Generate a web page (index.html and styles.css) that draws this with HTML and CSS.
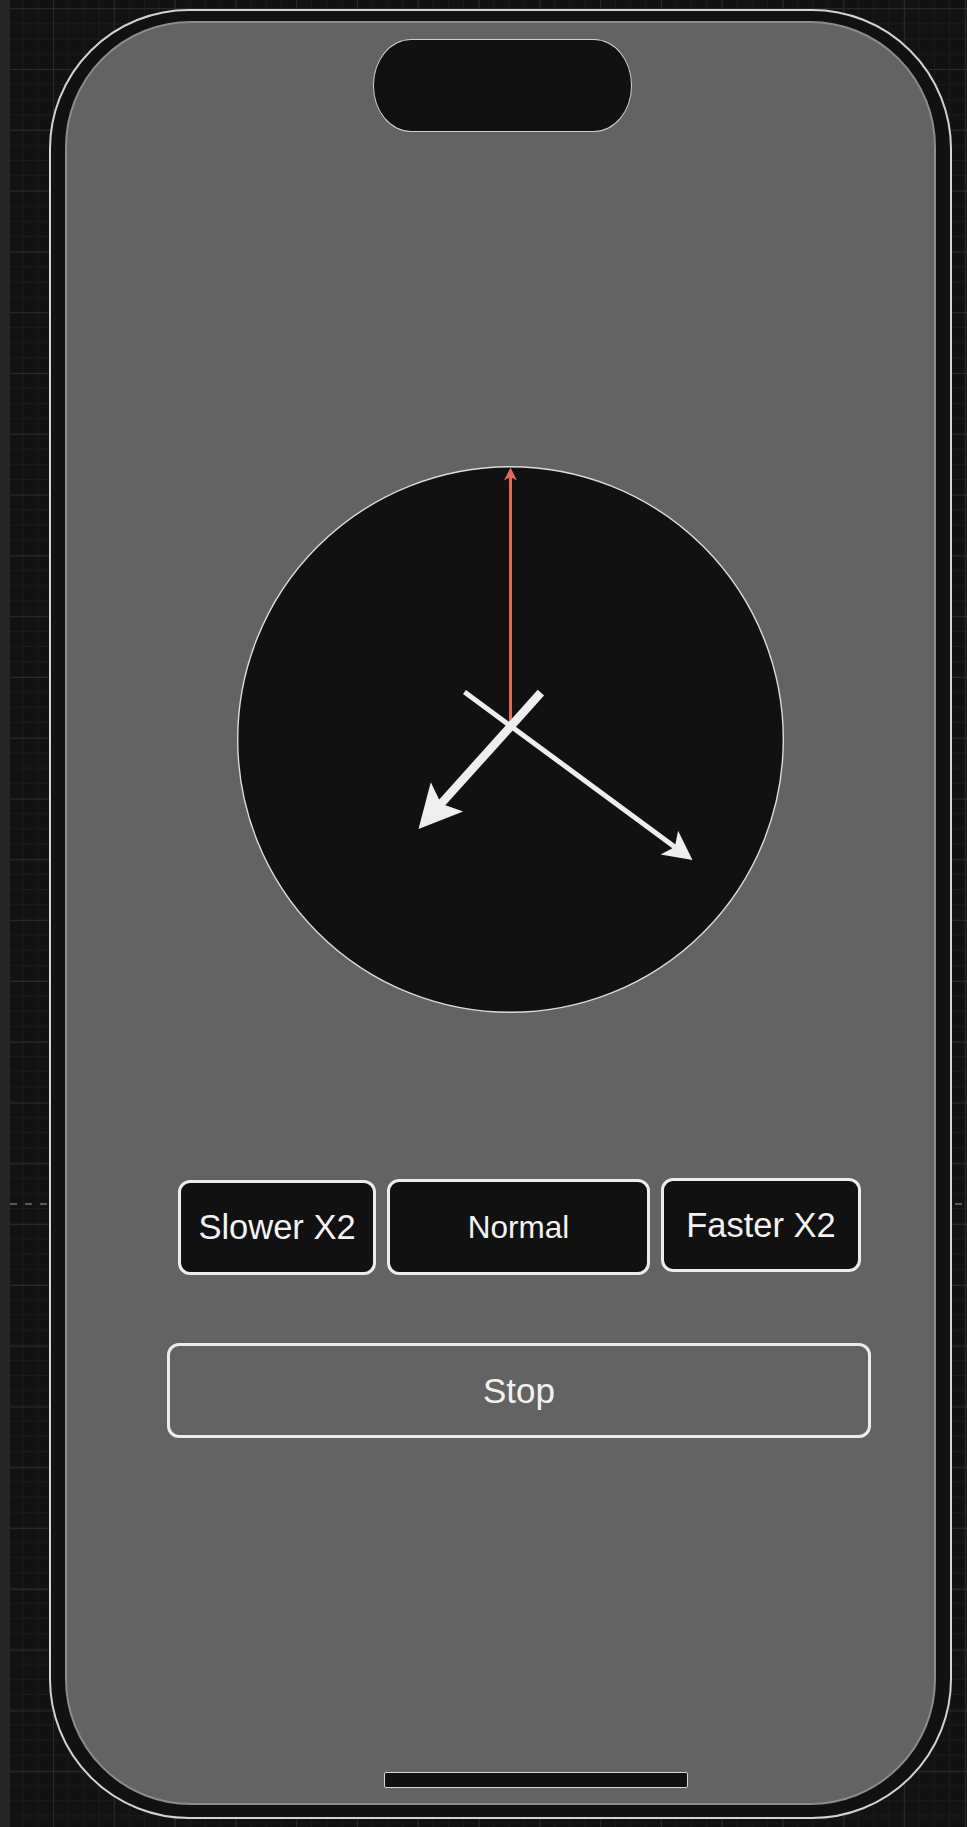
FILE: index.html
```html
<!DOCTYPE html>
<html lang="en">
<head>
<meta charset="utf-8">
<title>Clock</title>
<link rel="stylesheet" href="styles.css">
</head>
<body>
<div class="phone">
  <div class="screen">
    <div class="notch"></div>
    <svg class="clock" width="547" height="547" viewBox="0 0 547 547">
      <circle cx="273.5" cy="273.5" r="272.8" fill="#111111" stroke="#dcdcdc" stroke-width="1.4"/>
      <line x1="273.5" y1="258" x2="273.5" y2="10" stroke="#e4685b" stroke-width="3"/>
      <polygon points="273.5,1.5 267,14.5 273.5,11 280,14.5" fill="#e4685b"/>
      <line x1="303.9" y1="226.7" x2="202" y2="340" stroke="#eeeeee" stroke-width="8.5"/>
      <polygon points="181.5,363 193.8,316.3 204.2,337.7 226.2,345.4" fill="#eeeeee"/>
      <line x1="227.5" y1="226" x2="439.5" y2="382.2" stroke="#eeeeee" stroke-width="5"/>
      <polygon points="455.5,394 441.1,364.7 437.8,381 423.6,388.5" fill="#eeeeee"/>
    </svg>
    <div class="speeds">
      <button class="btn slower">Slower X2</button>
      <button class="btn normal">Normal</button>
      <button class="btn faster">Faster X2</button>
    </div>
    <button class="btn stop">Stop</button>
    <div class="home"></div>
  </div>
</div>
</body>
</html>
```

FILE: styles.css
```css
html, body {
  margin: 0;
  padding: 0;
  width: 967px;
  height: 1827px;
  overflow: hidden;
}

body {
  background-color: #121212;
  background-image:
    linear-gradient(#262626, #262626),
    repeating-linear-gradient(90deg, #5a5a5a 0 7px, transparent 7px 15px),
    linear-gradient(90deg, #2a2a2a 1px, transparent 1px),
    linear-gradient(#2a2a2a 1px, transparent 1px),
    linear-gradient(90deg, #1b1b1b 1px, transparent 1px),
    linear-gradient(#1b1b1b 1px, transparent 1px);
  background-size:
    10px 100%,
    100% 2px,
    60.8px 60.8px,
    60.8px 60.8px,
    15.2px 15.2px,
    15.2px 15.2px;
  background-position:
    0 0,
    10px 1203px,
    53px 8.2px,
    53px 8.2px,
    53px 8.2px,
    53px 8.2px;
  background-repeat:
    no-repeat,
    no-repeat,
    repeat,
    repeat,
    repeat,
    repeat;
  font-family: "Liberation Sans", Arial, sans-serif;
  display: flow-root;
}

.phone {
  box-sizing: border-box;
  width: 903px;
  height: 1810px;
  margin: 9px 0 0 49px;
  padding: 10px 14px 12px 14px;
  border: 2px solid #d2d2d2;
  border-radius: 140px;
  background: #111111;
}

.screen {
  box-sizing: border-box;
  width: 871px;
  height: 1784px;
  border: 2px solid #8c8c8c;
  border-radius: 126px;
  background: #636363;
  display: flex;
  flex-direction: column;
  align-items: flex-start;
  overflow: hidden;
}

.notch {
  box-sizing: border-box;
  width: 259px;
  height: 93px;
  margin: 16px 0 0 306px;
  border: 1.5px solid #d0d0d0;
  border-radius: 38px / 46px;
  background: #111111;
  flex: none;
}

.clock {
  display: block;
  flex: none;
  margin: 334px 0 0 169.5px;
}

.speeds {
  display: flex;
  align-items: flex-start;
  gap: 11px;
  margin: 165px 0 0 111px;
}

.btn {
  box-sizing: border-box;
  border: 3px solid #ececec;
  border-radius: 12px;
  background: #111111;
  color: #f2f2f2;
  font-family: "Liberation Sans", Arial, sans-serif;
  font-size: 34.5px;
  padding: 0;
  display: flex;
  align-items: center;
  justify-content: center;
  flex: none;
}

.slower {
  width: 198px;
  height: 95px;
  margin-top: 2px;
}

.normal {
  width: 263px;
  height: 96px;
  margin-top: 1px;
  font-size: 31.5px;
}

.faster {
  width: 200px;
  height: 94px;
  margin-left: 0;
}

.stop {
  width: 704px;
  height: 95px;
  margin: 68px 0 0 100px;
  background: transparent;
  font-size: 35px;
}

.home {
  box-sizing: border-box;
  width: 304px;
  height: 16px;
  margin: 334px 0 0 317px;
  border: 1.5px solid #d6d6d6;
  border-radius: 2px;
  background: #111111;
  flex: none;
}
```
